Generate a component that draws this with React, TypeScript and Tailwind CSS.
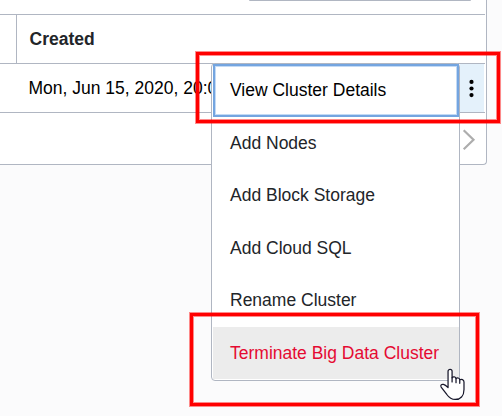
const actions = [
  { label: 'Add Nodes', height: 'h-[52px]' },
  { label: 'Add Block Storage', height: 'h-[53px]' },
  { label: 'Add Cloud SQL', height: 'h-[52px]' },
  { label: 'Rename Cluster', height: 'h-[53px]' },
];

function ClusterTable() {
  return (
    <div className="h-[165px] w-[487px] rounded-br-[4px] border-r border-b border-[#b0b6c2] bg-white">
      <div className="flex h-[14px] items-start pl-[249px]">
        <div className="h-px w-[222px] rounded-b-sm bg-[#b0b6c2]" />
      </div>
      <div className="flex h-[50px] w-[485px] border-y border-[#b0b6c2]">
        <div className="w-[17px] border-r border-[#b0b6c2]" />
        <div className="pl-[12.5px] text-[17.5px] leading-[48px] font-bold text-[#222529]">Created</div>
      </div>
      <div className="flex h-[49px] w-[485px] border-b border-[#b0b6c2]">
        <div className="w-[460px] pl-[28.5px] text-[17.5px] leading-[48px] whitespace-nowrap text-black">
          Mon, Jun 15, 2020, 20:0
        </div>
        <div className="flex w-[24px] flex-col items-center justify-center bg-[#e4f1fb]">
          <svg width="24" height="48" viewBox="0 0 24 48" fill="#000">
            <circle cx="11.5" cy="17.9" r="2.1" />
            <circle cx="11.5" cy="24.5" r="2.1" />
            <circle cx="11.5" cy="31.1" r="2.1" />
          </svg>
        </div>
      </div>
      <div className="flex justify-end pt-[16px] pr-[10px]">
        <svg width="14" height="22" viewBox="0 0 14 22" fill="none" stroke="#adadad" strokeWidth="2.2">
          <path d="M1.7 1.2 11.5 10.7 1.7 20.2" />
        </svg>
      </div>
    </div>
  );
}

function ActionMenu() {
  return (
    <div className="absolute top-[63px] left-[211px] h-[318px] w-[249px] rounded-[4px] border border-[#b0b6c2] bg-white pl-px text-[17.5px] text-[#222529]">
      <div className="h-[53px] w-[246px] border-2 border-[#74a5e0] text-black">
        <div className="h-full border border-[#c3daf5] pl-[14px] leading-[46px]">View Cluster Details</div>
      </div>
      {actions.map(({ label, height }) => (
        <div key={label} className={`${height} pl-[17px] leading-[52px]`}>{label}</div>
      ))}
      <div className="h-[52px] bg-[#ececec] pl-[17px] leading-[52px] text-[#e50a32]">Terminate Big Data Cluster</div>
    </div>
  );
}

export default function App() {
  return (
    <div className="relative h-[416px] w-[502px] overflow-hidden bg-[#fbfbfc] font-['Liberation_Sans',Arial,sans-serif]">
      <ClusterTable />
      <ActionMenu />
      <div className="absolute top-[52px] left-[196px] h-[71px] w-[304px] border-3 border-[#ff0000] shadow-[0_0_0_1px_#ff000073,inset_0_0_0_1px_#ff000073]" />
      <div className="absolute top-[313px] left-[190px] h-[93px] w-[289px] border-3 border-[#ff0000] shadow-[0_0_0_1px_#ff000073,inset_0_0_0_1px_#ff000073]" />
      <svg className="absolute top-[368px] left-[439px]" width="27" height="34" viewBox="0 0 27 34" fill="white" stroke="#17172b" strokeWidth="1.3" strokeLinejoin="round" strokeLinecap="round">
        <g transform="translate(.7 0) scale(.96)">
          <path d="M8.7 19.5V3.5C8.7.8 12.9.8 12.9 3.5V10.2C13.9 8.8 16.7 9 17 11C18.2 9.8 20.7 10.2 20.9 12.2C22.6 11.2 25.3 12.2 25.3 14.5V22.5C25.3 29.2 21.5 32.8 16.2 32.8C11.8 32.8 9.7 30.8 7.4 27.6L1.5 19.8C.5 18.2 1.9 16.6 3.9 17.1C5.5 17.5 7 18.7 8.7 20.3Z" />
          <path d="M12.9 10V14.5M17 11V15.3M20.9 12.2V16" fill="none" />
        </g>
      </svg>
    </div>
  );
}
